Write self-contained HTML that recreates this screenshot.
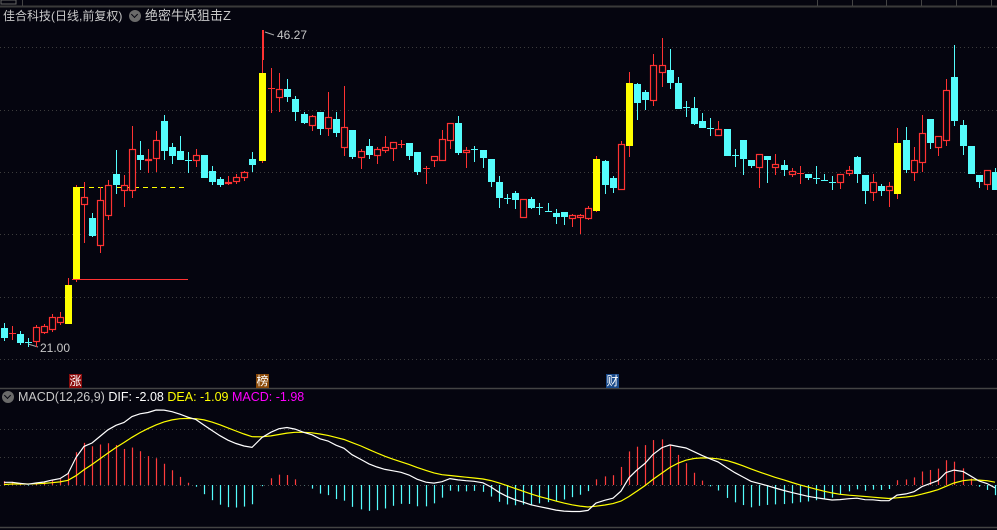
<!DOCTYPE html>
<html><head><meta charset="utf-8">
<style>
html,body{margin:0;padding:0;background:#05050f;width:997px;height:530px;overflow:hidden;font-family:"Liberation Sans","Noto Sans CJK SC",sans-serif;}
#wrap{position:relative;width:997px;height:530px;}
svg{position:absolute;left:0;top:0;}
.t{position:absolute;white-space:nowrap;font-size:13px;color:#c8c8c8;line-height:14px;}
.ic{position:absolute;width:12px;height:12px;border-radius:6px;background:#6a6a6a;}
.ic:after{content:"";position:absolute;left:3px;top:2px;width:4px;height:4px;border-right:1.5px solid #05050f;border-bottom:1.5px solid #05050f;transform:rotate(45deg);}
.tag{position:absolute;width:13px;height:14px;font-size:12px;line-height:14px;text-align:center;color:#fff;}
</style></head><body><div id="wrap">
<svg id="s" width="997" height="530" xmlns="http://www.w3.org/2000/svg"></svg>
<div class="t" style="left:3px;top:9px;font-size:12px;">佳合科技(日线,前复权)</div>
<div class="ic" style="left:129px;top:10px;"></div>
<div class="t" style="left:145px;top:9px;">绝密牛妖狙击Z</div>
<div class="t" style="left:277px;top:28px;font-size:12px;">46.27</div>
<div class="t" style="left:40px;top:341px;font-size:12px;">21.00</div>
<div class="tag" style="left:69px;top:374px;background:#8a0c0c;">涨</div>
<div class="tag" style="left:256px;top:374px;background:#8a4a0a;">榜</div>
<div class="tag" style="left:606px;top:374px;background:#1a4a8a;">财</div>
<div class="ic" style="left:2px;top:391px;"></div>
<div class="t" style="left:18px;top:390px;font-size:12.5px;">MACD(12,26,9) <span style="color:#fff">DIF: -2.08</span> <span style="color:#ffff00">DEA: -1.09</span> <span style="color:#ff00ff">MACD: -1.98</span></div>
</div>
<script>
var S=document.getElementById('s'),h='';
function L(x1,y1,x2,y2,c,w,d){h+='<line x1="'+x1+'" y1="'+y1+'" x2="'+x2+'" y2="'+y2+'" stroke="'+c+'" stroke-width="'+(w||1)+'"'+(d?' stroke-dasharray="'+d+'"':'')+'/>';}
L(0,6.5,997,6.5,'#3a3a3a',2);
[22,817,852,886,921,956,991].forEach(function(x){L(x+.5,0,x+.5,6,'#444',1);});
h+='<rect x="1" y="0" width="15" height="4" fill="none" stroke="#666"/>';
[47,110,172,234,297,359,429,457].forEach(function(y){L(0,y+.5,997,y+.5,'#3c3c3c',1,'1 3');});
L(0,485.5,997,485.5,'#4a4a4a',1,'1 3');
L(0,388.5,997,388.5,'#444',1.5);
L(0,527.5,997,527.5,'#444',1.5);
var D=[
[4,328,337,323,341,'c'],[12,333,333,326,340,'r'],[20,334,342,331,345,'c'],[28,342,342,338,347,'c'],[36,327,341,325,347,'r'],[44,326,332,324,334,'r'],[52,317,329,314,332,'r'],[60,317,322,312,325,'r'],
[68,285,323,278,324,'y'],[76,187,278,185,282,'y'],[84,197,204,182,243,'r'],[92,218,235,213,237,'c'],[100,200,245,187,253,'r'],[108,185,215,180,220,'r'],[116,174,184,150,194,'c'],[124,185,190,175,207,'r'],[132,149,190,126,198,'r'],[140,155,159,141,170,'c'],[148,159,160,149,173,'r'],[156,140,158,131,172,'r'],[164,121,150,115,160,'c'],[172,147,155,143,164,'c'],[180,151,159,136,159,'c'],[188,160,160,152,173,'c'],[196,155,160,149,167,'r'],[204,155,177,155,177,'c'],[212,171,181,166,185,'c'],[220,179,184,177,187,'c'],[228,182,183,176,185,'r'],[236,177,181,174,184,'r'],[244,172,177,171,181,'r'],[252,159,164,152,172,'c'],
[262,73,160,30,163,'y'],[271,88,88,68,113,'r'],[279,89,97,73,112,'r'],[287,89,96,79,102,'c'],[295,99,111,96,121,'c'],[304,114,122,112,124,'c'],[312,116,125,115,131,'r'],[320,112,128,112,135,'c'],[328,117,128,92,136,'r'],[336,119,132,112,137,'c'],[344,127,147,86,156,'r'],[352,130,156,130,159,'c'],[361,151,157,149,169,'r'],[369,146,154,139,159,'c'],[377,149,155,147,164,'r'],[385,147,150,136,153,'r'],[393,142,148,142,161,'r'],[401,144,144,140,148,'r'],[409,143,155,143,160,'c'],[417,152,171,152,175,'c'],[426,168,168,166,184,'r'],[434,156,160,156,167,'r'],[442,139,160,130,161,'r'],[450,123,140,123,149,'r'],[458,123,152,116,155,'c'],[466,150,152,147,168,'r'],[474,149,149,146,162,'c'],[483,150,157,150,168,'c'],[491,159,181,159,187,'c'],[499,182,197,176,208,'c'],[507,198,198,194,204,'c'],[515,193,199,191,209,'c'],[523,199,217,199,217,'r'],[531,199,207,197,209,'c'],[539,207,207,203,215,'c'],[548,211,211,203,211,'c'],[556,213,216,209,224,'c'],[564,212,216,212,225,'c'],[572,215,218,214,227,'r'],[580,215,217,214,234,'r'],[588,208,218,206,220,'r'],
[596,159,210,156,212,'y'],[605,161,184,160,194,'c'],[613,178,187,176,193,'c'],[621,144,189,141,190,'r'],[629,83,145,72,157,'y'],[637,84,102,83,120,'c'],[645,92,99,90,110,'c'],[653,65,100,54,106,'r'],[662,65,72,38,87,'r'],[670,70,82,49,89,'c'],[678,83,108,77,108,'c'],[686,107,107,101,117,'c'],[694,108,123,97,125,'c'],[702,121,127,113,127,'c'],[710,128,128,118,136,'c'],[718,129,135,121,135,'r'],[727,129,155,129,155,'c'],[735,155,155,149,167,'c'],[743,140,158,140,175,'c'],[751,160,165,160,168,'c'],[759,154,167,154,188,'r'],[767,156,159,156,183,'c'],[775,164,167,154,175,'r'],[784,165,169,160,176,'c'],[792,171,174,168,177,'r'],[800,173,173,166,184,'r'],[808,174,177,174,180,'c'],[816,178,178,166,184,'c'],[824,180,180,174,180,'c'],[832,182,182,176,190,'c'],[840,174,182,174,189,'r'],[849,170,173,166,176,'r'],[857,157,173,156,183,'c'],[865,175,190,175,204,'c'],[873,182,192,174,201,'r'],[881,186,190,184,196,'c'],[889,186,190,182,207,'r'],
[897,143,193,128,199,'y'],[906,140,169,127,173,'c'],[914,160,172,147,181,'r'],[922,133,162,115,172,'r'],[930,119,142,119,149,'c'],[938,136,147,136,156,'r'],[946,90,140,79,146,'r'],[954,77,120,45,126,'c'],[963,125,145,120,155,'c'],[971,146,173,146,173,'c'],[979,175,181,175,188,'c'],[987,170,184,170,190,'r'],[995,172,189,168,189,'c']
];
var R='#ff3232',C='#54fcfc',Y='#ffff00';
L(80,187.5,185,187.5,Y,1,'5 4');
L(72,279.5,188,279.5,R,1);
L(263.5,30,263.5,60,R,1);
L(265,32,274,35,'#aaa',1);L(28,344,38,347,'#aaa',1);
D.forEach(function(d){
 var x=d[0],t=d[1],b=d[2],hi=d[3],lo=d[4],k=d[5],col=k=='r'?R:(k=='c'?C:Y);
 if(k!='y'){L(x+.5,hi,x+.5,lo,col,1);}else{L(x+.5,hi,x+.5,lo,R,1);}
 if(b-t<1){L(x-3,t+.5,x+4,t+.5,col,1);}
 else if(k=='r'){h+='<rect x="'+(x-2.5)+'" y="'+(t+.5)+'" width="6" height="'+(b-t)+'" fill="#05050f" stroke="'+R+'" stroke-width="1.2"/>';}
 else{h+='<rect x="'+(x-3)+'" y="'+t+'" width="7" height="'+(b-t+1)+'" fill="'+col+'"/>';}
});
var cl=D.map(function(d){return -(d[5]=='c'?d[2]:d[1]);});
var e12=cl[0]+2,e26=cl[0],dea=0,DIF=[],DEA=[];
cl.forEach(function(c){e12=e12*11/13+c*2/13;e26=e26*25/27+c*2/27;var df=e12-e26;dea=dea*8/10+df*2/10;DIF.push(df);DEA.push(dea);});
var mx=0;DIF.forEach(function(v){mx=Math.max(mx,Math.abs(v));});
var sc=75/mx,z=485;
D.forEach(function(d,i){var v=2*(DIF[i]-DEA[i])*sc*0.9;var x=d[0]+.5;L(x,z,x,z-v,v>0?'#ff3c3c':C,1.2);});
function pl(a,c){h+='<polyline fill="none" stroke="'+c+'" stroke-width="1.2" points="'+a.map(function(v,i){return D[i][0]+','+(z-v*sc).toFixed(1);}).join(' ')+'"/>';}
pl(DEA,Y);pl(DIF,'#ffffff');
S.innerHTML=h;
</script>
</body></html>
